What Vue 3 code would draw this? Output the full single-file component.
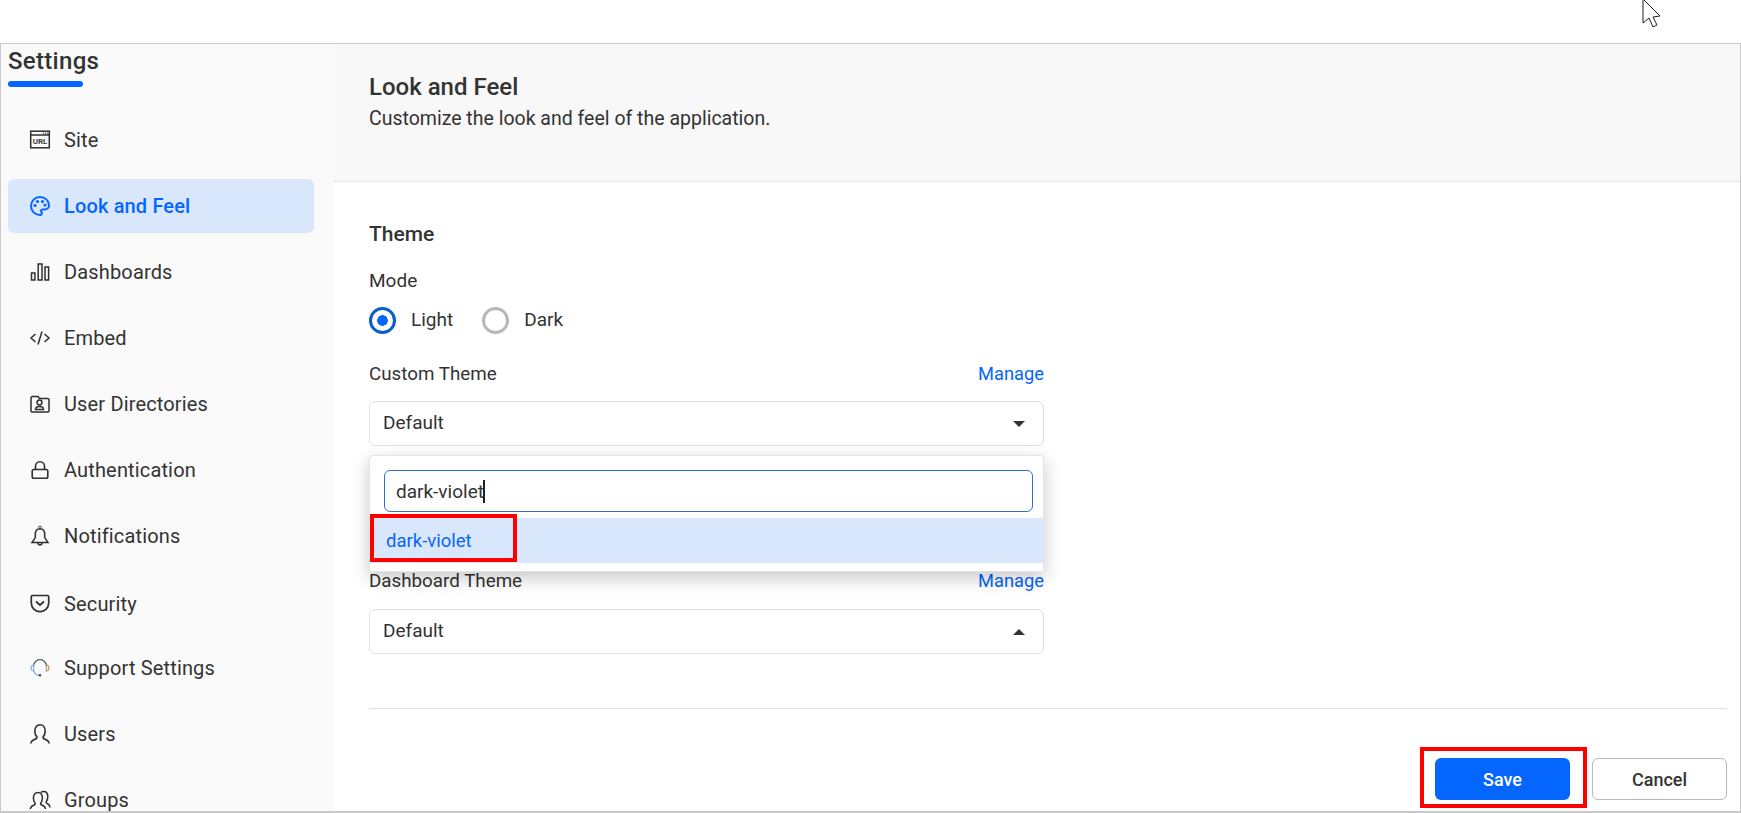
<template>
  <div class="page">
    <svg class="cursor" width="20" height="28" viewBox="0 0 20 28">
      <path d="M1 -1 L1 23 L7 18 L11 27 L15 25 L11 17 L18 16 Z" fill="#fff" stroke="#222" stroke-width="1" />
    </svg>

    <div class="frame">
      <aside class="sidebar">
        <div class="side-title">Settings</div>
        <div class="side-line"></div>
        <nav class="nav">
          <div
            v-for="item in navItems"
            :key="item.label"
            class="nav-item"
            :class="{ active: item.active, shifted: item.label === 'Security' }"
          >
            <svg class="nav-icon" width="20" height="20" viewBox="0 0 20 20" fill="none" :stroke="iconColor(item)" stroke-width="1.5">
              <template v-if="item.label === 'Site'">
                <rect x="0.7" y="1.2" width="18.6" height="16.6" />
                <path d="M1 5h18" />
                <path d="M13 3.2h1.2M15 3.2h1.2M17 3.2h1.2" stroke-width="1" />
                <text x="10" y="14.300" text-anchor="middle" class="url-text">URL</text>
              </template>
              <template v-else-if="item.label === 'Look and Feel'">
                <path d="M10 1a9 9 0 0 0 0 18c1.2 0 1.8-.8 1.8-1.7 0-1-.8-1.3-.8-2.2 0-1 .8-1.6 1.8-1.6h2c2.3 0 4.2-1.7 4.2-4C19 4.5 15 1 10 1z" stroke-width="2" />
                <g fill="#0565ff" stroke="none">
                  <circle cx="5" cy="9.500" r="1.600" />
                  <circle cx="7.500" cy="5.500" r="1.600" />
                  <circle cx="12.500" cy="5.500" r="1.600" />
                  <circle cx="15" cy="9" r="1.600" />
                </g>
              </template>
              <template v-else-if="item.label === 'Dashboards'">
                <rect x="1.500" y="11" width="3.400" height="7" />
                <rect x="8.200" y="2" width="3.800" height="16" />
                <rect x="15" y="5" width="3.600" height="13" />
              </template>
              <template v-else-if="item.label === 'Embed'">
                <path d="M5.500 6 1 10l4.500 4M14.500 6 19 10l-4.500 4M12 3.500 8 16.500" />
              </template>
              <template v-else-if="item.label === 'User Directories'">
                <path d="M1 4a1.500 1.500 0 0 1 1.500-1.500H8L9.500 4.500h8A1.500 1.500 0 0 1 19 6v11a1 1 0 0 1-1 1H2a1 1 0 0 1-1-1z" />
                <circle cx="9.500" cy="8.500" r="2.400" />
                <path d="M5.500 15.500c0-2.300 1.800-3 4-3s4 .7 4 3z" />
              </template>
              <template v-else-if="item.label === 'Authentication'">
                <rect x="2.200" y="9.500" width="15.600" height="8.800" rx="1.800" stroke-width="1.600" />
                <path d="M5.500 9.500V6.300a4.500 4.500 0 0 1 9 0v3.200" stroke-width="1.600" />
              </template>
              <template v-else-if="item.label === 'Notifications'">
                <path d="M10 2.800c-3.200 0-4.700 2.700-4.700 5.800v3L2 16.500h16l-3.300-4.900v-3c0-3.100-1.500-5.800-4.700-5.800z" />
                <circle cx="10" cy="1.500" r="1.300" stroke-width="1" />
                <path d="M8 17a2 2 0 0 0 4 0" />
              </template>
              <template v-else-if="item.label === 'Security'">
                <path d="M2.500 1.500h15a1.200 1.200 0 0 1 1.200 1.200V9A8.700 8.700 0 0 1 1.300 9V2.700a1.200 1.200 0 0 1 1.200-1.200z" stroke-width="1.700" />
                <path d="M6 7.500l4 3.500 4-3.500" stroke-width="1.700" />
              </template>
              <template v-else-if="item.label === 'Support Settings'">
                <path d="M3.500 8.500a6.500 7 0 0 1 13 0" stroke="#3f4a55" stroke-width="1.200" />
                <path d="M3.500 6.500C1.500 7.500.8 9 1 10.500c.2 1.300 1.300 2.300 2.800 2.500z" stroke="#7fa9d4" stroke-width="1.100" />
                <path d="M16.500 6.500c2 1 2.700 2.500 2.500 4-.2 1.300-1.300 2.300-2.800 2.500z" stroke="#b98f68" stroke-width="1.100" />
                <path d="M3.800 13c.7 2.700 3 4.300 6.200 4.300" stroke="#7fa9d4" stroke-width="1.100" />
                <circle cx="10" cy="17.300" r="1.200" fill="#3f4a55" stroke="none" />
              </template>
              <template v-else-if="item.label === 'Users'">
                <path d="M.8 19.500c.3-2.500 2-3.600 4.200-4.300 1.500-.5 2.200-1.100 1.900-2.300C5.600 11.500 4.800 9.500 4.800 7.200 4.800 3.500 7 .8 10 .8s5.200 2.700 5.200 6.400c0 2.300-.8 4.300-2.100 5.700-.3 1.200.4 1.800 1.900 2.300 2.200.7 3.900 1.800 4.200 4.300" stroke-width="1.600" />
              </template>
              <template v-else>
                <path d="M.3 19c.2-2 1.400-3.200 3.300-3.800 1.300-.4 1.800-1 1.500-2C4 11.800 3.400 10 3.400 8c0-3.100 1.800-5.500 4.500-5.500S12.400 4.900 12.400 8c0 2-.6 3.800-1.700 5.200-.3 1 .2 1.600 1.500 2 1.900.6 3.100 1.800 3.300 3.800" />
                <path d="M10.800 2.500c.8-.6 1.800-1 2.800-1 2.600 0 4.200 2.300 4.200 5.200 0 2-.5 3.700-1.600 5-.3 1 .2 1.600 1.300 2 1.400.5 2.300 1.700 2.500 3.800" />
              </template>
            </svg>
            <span>{{ item.label }}</span>
          </div>
        </nav>
      </aside>

      <main class="main">
        <header class="main-head">
          <h1>Look and Feel</h1>
          <p>Customize the look and feel of the application.</p>
        </header>

        <section class="content">
          <div class="form">
            <h2>Theme</h2>
            <div class="mode-label">Mode</div>
            <div class="radios">
              <label class="radio on"><i></i>Light</label>
              <label class="radio"><i></i>Dark</label>
            </div>

            <div class="field-head first">
              <span>Custom Theme</span>
              <a>Manage</a>
            </div>
            <div class="select">
              <span>Default</span>
              <b class="arrow down"></b>
            </div>

            <div class="popup">
              <div class="search">
                <span>dark-violet</span><em class="caret"></em>
              </div>
              <div class="option">dark-violet</div>
              <div class="mark option-mark"></div>
            </div>

            <div class="field-head second">
              <span>Dashboard Theme</span>
              <a>Manage</a>
            </div>
            <div class="select">
              <span>Default</span>
              <b class="arrow up"></b>
            </div>
          </div>

          <div class="divider"></div>

          <div class="actions">
            <div class="save-wrap">
              <button class="btn save">Save</button>
              <div class="mark save-mark"></div>
            </div>
            <button class="btn cancel">Cancel</button>
          </div>
        </section>
      </main>
    </div>
  </div>
</template>

<script setup>
const navItems = [
  { label: 'Site' },
  { label: 'Look and Feel', active: true },
  { label: 'Dashboards' },
  { label: 'Embed' },
  { label: 'User Directories' },
  { label: 'Authentication' },
  { label: 'Notifications' },
  { label: 'Security' },
  { label: 'Support Settings' },
  { label: 'Users' },
  { label: 'Groups' }
]

const iconColor = (item) => (item.active ? '#0565ff' : '#2e2e2e')
</script>

<style scoped>
.page {
  position: relative;
  width: 1741px;
  height: 813px;
  padding-top: 43px;
  box-sizing: border-box;
  background: #fff;
  overflow: hidden;
  font-family: Roboto, "Liberation Sans", sans-serif;
  color: #333;
}

.cursor {
  position: absolute;
  left: 1642px;
  top: 0;
}

.frame {
  display: flex;
  height: 770px;
  box-sizing: border-box;
  border: 1px solid #c8c8c8;
  border-bottom-width: 2px;
  overflow: hidden;
}

.sidebar {
  width: 332px;
  flex: none;
  box-sizing: border-box;
  padding: 3px 19px 0 7px;
  background: #fafafa;
}

.side-title {
  font-size: 24px;
  line-height: 28px;
  font-weight: 500;
  letter-spacing: 0.3px;
}

.side-line {
  width: 75px;
  height: 6px;
  margin-top: 6px;
  border-radius: 3px;
  background: #0565ff;
}

.nav {
  display: flex;
  flex-direction: column;
  gap: 12px;
  margin-top: 26px;
}

.nav-item {
  display: flex;
  align-items: center;
  flex: none;
  height: 54px;
  box-sizing: border-box;
  padding-left: 22px;
  border-radius: 6px;
  font-size: 20px;
  letter-spacing: 0.15px;
}

.nav-item.shifted {
  padding-top: 4px;
}

.nav-item.active {
  background: #d9e7fd;
  color: #0565ff;
  font-weight: 500;
}

.nav-icon {
  flex: none;
  margin-right: 14px;
  overflow: visible;
}

.url-text {
  font-size: 8px;
  font-weight: 700;
  fill: #3a3a3a;
  stroke: none;
  letter-spacing: 0;
}

.main {
  flex: 1;
  min-width: 0;
  display: flex;
  flex-direction: column;
}

.main-head {
  height: 138px;
  flex: none;
  box-sizing: border-box;
  padding: 28px 0 0 36px;
  background: #f8f8f8;
  border-bottom: 1px solid #e6e6e6;
}

.main-head h1 {
  margin: 0;
  font-size: 24px;
  line-height: 30px;
  font-weight: 500;
}

.main-head p {
  margin: 4px 0 0;
  font-size: 19.500px;
  line-height: 26px;
}

.content {
  flex: 1;
  padding: 39px 13px 0 36px;
  background: #fff;
}

.form {
  position: relative;
  width: 675px;
}

.form h2 {
  margin: 0;
  font-size: 21px;
  line-height: 26px;
  font-weight: 500;
}

.mode-label {
  margin-top: 23px;
  font-size: 19px;
  line-height: 22px;
}

.radios {
  display: flex;
  gap: 29px;
  margin-top: 14px;
}

.radio {
  display: flex;
  align-items: center;
  gap: 15px;
  font-size: 19px;
  line-height: 28px;
}

.radio i {
  width: 27px;
  height: 27px;
  box-sizing: border-box;
  border: 3px solid #b8b8b8;
  border-radius: 50%;
  background: #fff;
}

.radio.on i {
  border-color: #0a5ccf;
  background: radial-gradient(circle, #0565ff 0 5px, #fff 5.500px);
}

.field-head {
  display: flex;
  justify-content: space-between;
  font-size: 18.800px;
  line-height: 22px;
}

.field-head a {
  color: #0565ff;
  font-size: 18.300px;
}

.field-head.first {
  margin-top: 29px;
}

.field-head.second {
  margin-top: 124px;
  padding-bottom: 1px;
}

.select {
  display: flex;
  align-items: center;
  justify-content: space-between;
  height: 45px;
  margin-top: 16px;
  box-sizing: border-box;
  padding: 0 18px 2px 13px;
  border: 1px solid #e0e0e0;
  border-radius: 6px;
  background: #fff;
  font-size: 19px;
}

.arrow {
  width: 0;
  height: 0;
  margin-top: 2px;
  border-left: 6px solid transparent;
  border-right: 6px solid transparent;
}

.arrow.down {
  border-top: 6px solid #333;
}

.arrow.up {
  border-bottom: 6px solid #333;
}

.popup {
  position: absolute;
  left: 0;
  right: 0;
  top: 234px;
  height: 117px;
  box-sizing: border-box;
  padding: 14px 10px 0 14px;
  border: 1px solid #e4e4e4;
  border-radius: 4px 4px 0 0;
  background: #fff;
  box-shadow: 0 6px 18px rgba(0, 0, 0, 0.22);
  z-index: 2;
}

.search {
  display: flex;
  align-items: center;
  height: 42px;
  box-sizing: border-box;
  padding-left: 11px;
  border: 1px solid #2f6fd0;
  border-radius: 6px;
  font-size: 19px;
}

.caret {
  width: 2px;
  height: 23px;
  margin-left: -1px;
  background: #222;
}

.option {
  height: 45px;
  margin: 6px -10px 0 -14px;
  padding-left: 16px;
  line-height: 47px;
  background: #d9e7fd;
  color: #0565ff;
  font-size: 18.500px;
}

.mark {
  position: absolute;
  box-sizing: border-box;
  border: 4px solid #f00;
}

.option-mark {
  left: 0;
  top: 58px;
  width: 147px;
  height: 48px;
}

.divider {
  height: 1px;
  margin-top: 54px;
  background: #e0e0e0;
}

.actions {
  display: flex;
  justify-content: flex-end;
  gap: 22px;
  margin-top: 49px;
}

.save-wrap {
  position: relative;
}

.save-mark {
  left: -15px;
  right: -17px;
  top: -11px;
  bottom: -8px;
}

.btn {
  display: block;
  width: 135px;
  height: 42px;
  box-sizing: border-box;
  border-radius: 6px;
  font-family: inherit;
  font-size: 18px;
  font-weight: 500;
}

.btn.save {
  border: none;
  background: #0565ff;
  color: #fff;
}

.btn.cancel {
  border: 1px solid #b8b8b8;
  background: #fff;
  color: #333;
}
</style>
